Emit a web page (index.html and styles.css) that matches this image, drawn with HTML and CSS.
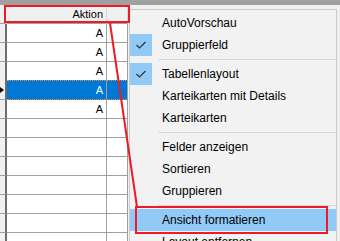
FILE: index.html
```html
<!doctype html>
<html lang="de">
<head>
    <meta charset="utf-8">
    <title>Ansicht formatieren</title>
    <link rel="stylesheet" href="styles.css">
</head>
<body>

    <div class="topbar"></div>

    <div class="grid">
        <div class="row head">
            <div class="sel"></div>
            <div class="cell c1">Aktion</div>
            <div class="cell c2"></div>
        </div>
        <div class="row"><div class="sel"></div><div class="cell c1">A</div><div class="cell c2"></div></div>
        <div class="row"><div class="sel"></div><div class="cell c1">A</div><div class="cell c2"></div></div>
        <div class="row"><div class="sel"></div><div class="cell c1">A</div><div class="cell c2"></div></div>
        <div class="row cur"><div class="sel"><span class="arrow-tip"></span></div><div class="cell c1">A</div><div class="cell c2"></div></div>
        <div class="row"><div class="sel"></div><div class="cell c1">A</div><div class="cell c2"></div></div>
        <div class="row"><div class="sel"></div><div class="cell c1"></div><div class="cell c2"></div></div>
        <div class="row"><div class="sel"></div><div class="cell c1"></div><div class="cell c2"></div></div>
        <div class="row"><div class="sel"></div><div class="cell c1"></div><div class="cell c2"></div></div>
        <div class="row"><div class="sel"></div><div class="cell c1"></div><div class="cell c2"></div></div>
        <div class="row"><div class="sel"></div><div class="cell c1"></div><div class="cell c2"></div></div>
        <div class="row"><div class="sel"></div><div class="cell c1"></div><div class="cell c2"></div></div>
        <div class="row"><div class="sel"></div><div class="cell c1"></div><div class="cell c2"></div></div>
    </div>

    <div class="menu">
        <div class="item"><span class="check"></span><span class="label">AutoVorschau</span></div>
        <div class="item"><span class="check on"><svg width="22" height="22" viewBox="0 0 22 22"><path d="M6.5 11 L9.5 14 L15.5 8" fill="none" stroke="#333" stroke-width="1.2"/></svg></span><span class="label">Gruppierfeld</span></div>
        <div class="sep"></div>
        <div class="item"><span class="check on"><svg width="22" height="22" viewBox="0 0 22 22"><path d="M6.5 11 L9.5 14 L15.5 8" fill="none" stroke="#333" stroke-width="1.2"/></svg></span><span class="label">Tabellenlayout</span></div>
        <div class="item"><span class="check"></span><span class="label">Karteikarten mit Details</span></div>
        <div class="item"><span class="check"></span><span class="label">Karteikarten</span></div>
        <div class="sep"></div>
        <div class="item"><span class="check"></span><span class="label">Felder anzeigen</span></div>
        <div class="item"><span class="check"></span><span class="label">Sortieren</span></div>
        <div class="item"><span class="check"></span><span class="label">Gruppieren</span></div>
        <div class="sep"></div>
        <div class="item hot"><span class="check"></span><span class="label">Ansicht formatieren</span></div>
        <div class="item"><span class="check"></span><span class="label">Layout entfernen</span></div>
    </div>

    <!-- annotations -->
    <div class="mark mark-head"></div>
    <div class="mark mark-item"></div>
    <svg class="pointer" width="340" height="241" viewBox="0 0 340 241">
        <line x1="110" y1="23" x2="137" y2="207" stroke="#ed1c24" stroke-width="2"/>
    </svg>

</body>
</html>
```

FILE: styles.css
```css
body {
    margin: 0;
    width: 340px;
    height: 241px;
    overflow: hidden;
    position: relative;
    background: #f0f0f0;
    font-family: "Liberation Sans", Arial, sans-serif;
}

.topbar {
    height: 5px;
    background: #a0a0a0;
}

.grid {
    width: 128px;
}

.row {
    display: flex;
    height: 19px;
}

.sel {
    width: 7px;
    flex: none;
    box-sizing: border-box;
    background: #f0f0f0;
    border-right: 2px solid #6d6d6d;
    border-bottom: 1px solid #a0a0a0;
    display: flex;
    align-items: center;
}

.cell {
    box-sizing: border-box;
    flex: none;
    background: #fff;
    border-right: 1px solid #a0a0a0;
    border-bottom: 1px solid #a0a0a0;
    font-size: 11px;
    line-height: 18px;
    color: #000;
}

.c1 {
    width: 100px;
    text-align: right;
    padding-right: 3px;
}

.c2 {
    width: 21px;
}

.head .sel {
    border-right-color: #f0f0f0;
}

.head .cell {
    background: #f0f0f0;
    border-right-color: #d5d5d5;
}

.cur {
    height: 20px;
    margin-top: -1px;
}

.cur .cell {
    background: #0078d7;
    color: #fff;
    line-height: 18px;
    border-top: 1px dotted #ff8728;
    border-bottom: 1px dotted #ff8728;
}

.arrow-tip {
    width: 0;
    height: 0;
    border-left: 4px solid #000;
    border-top: 3px solid transparent;
    border-bottom: 3px solid transparent;
}

.menu {
    position: absolute;
    left: 129px;
    top: 9px;
    width: 208px;
    box-sizing: border-box;
    background: #f2f2f2;
    border: 1px solid #cccccc;
    padding: 2px 0;
    font-size: 12px;
    color: #000;
}

.item {
    display: flex;
    align-items: center;
    height: 22px;
}

.item.hot {
    background: #91c9f7;
}

.check {
    width: 22px;
    height: 22px;
    flex: none;
    display: flex;
}

.check.on {
    background: #91c9f7;
}

.label {
    margin-left: 10px;
    white-space: nowrap;
}

.sep {
    height: 7px;
    display: flex;
    align-items: center;
    padding-left: 28px;
}

.sep::after {
    content: "";
    flex: 1;
    height: 1px;
    background: #d7d7d7;
}

.mark {
    position: absolute;
    box-sizing: border-box;
    border: 2px solid #ed1c24;
}

.mark-head {
    left: 4px;
    top: 5px;
    width: 126px;
    height: 18px;
}

.mark-item {
    left: 135px;
    top: 206px;
    width: 193px;
    height: 28px;
}

.pointer {
    position: absolute;
    left: 0;
    top: 0;
    pointer-events: none;
}
```
